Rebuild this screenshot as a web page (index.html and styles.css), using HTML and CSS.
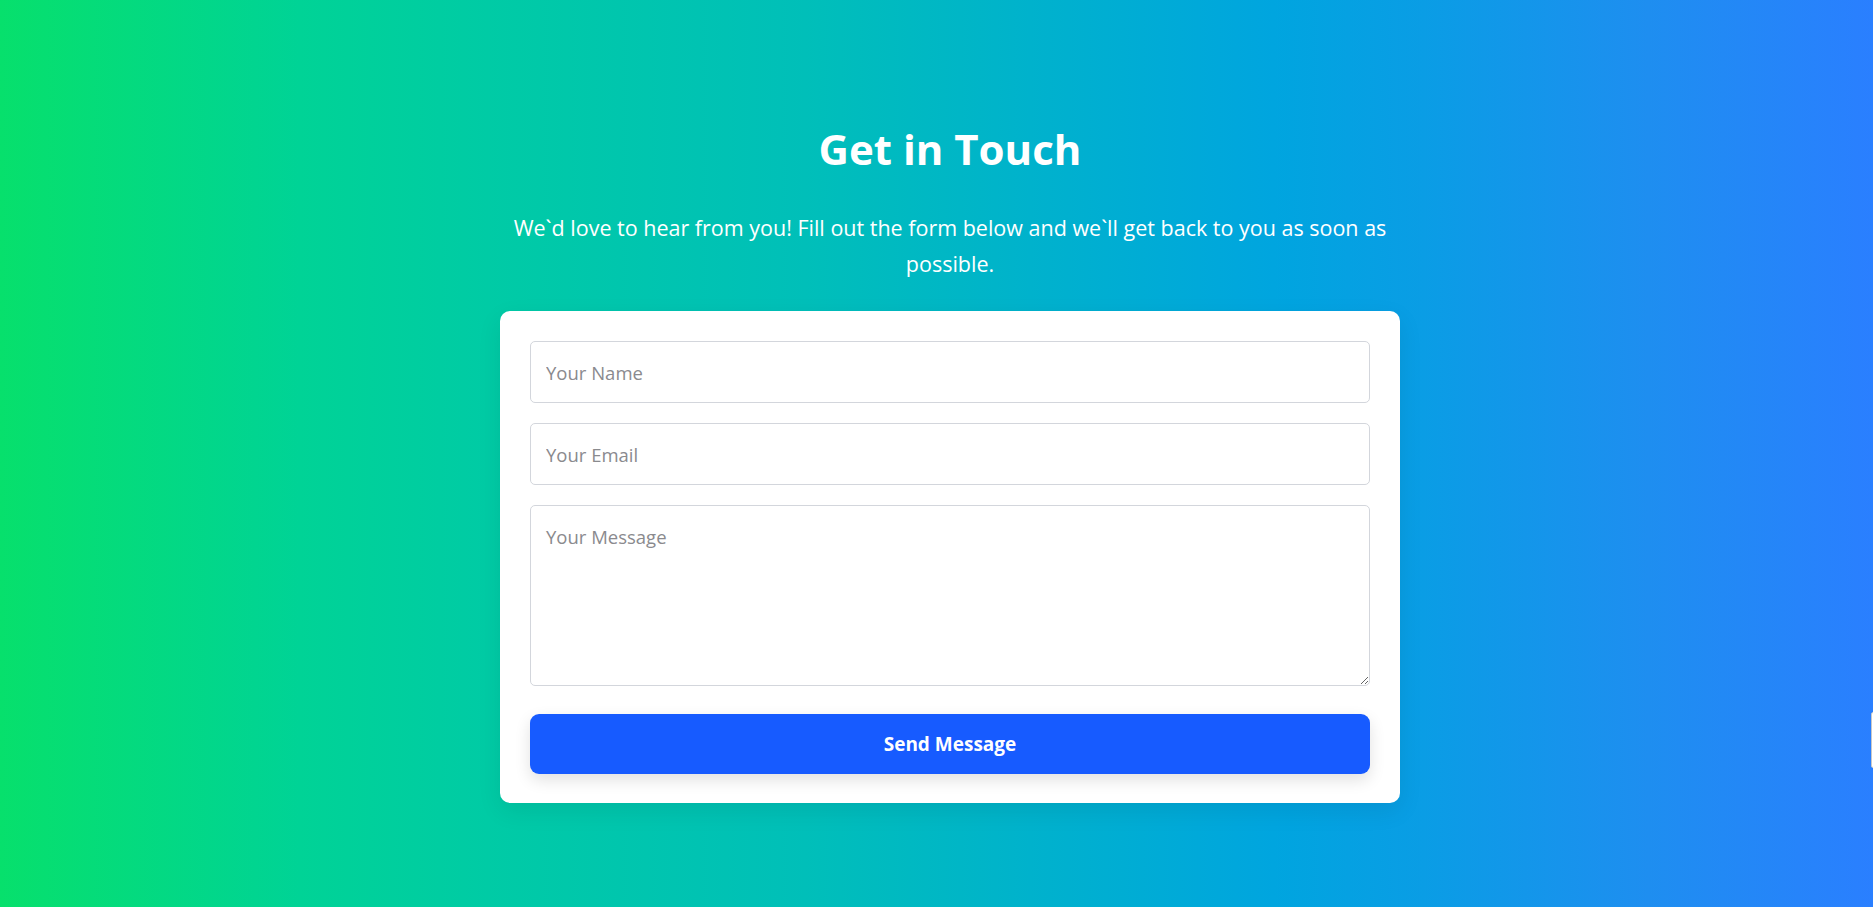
FILE: index.html
```html
<!DOCTYPE html>
<html lang="en">
<head>
<meta charset="utf-8">
<title>Contact</title>
<link rel="stylesheet" href="styles.css">
</head>
<body>
  <main class="contact">
    <h1 class="contact-title">Get in Touch</h1>
    <p class="contact-intro">We`d love to hear from you! Fill out the form below and we`ll get back to you as soon as possible.</p>
    <form class="contact-card">
      <input class="field" type="text" placeholder="Your Name">
      <input class="field" type="email" placeholder="Your Email">
      <textarea class="field field-area" placeholder="Your Message"></textarea>
      <button class="send-btn" type="button">Send Message</button>
    </form>
  </main>
  <div class="edge-tab"></div>
</body>
</html>
```
FILE: styles.css
```css
* { box-sizing: border-box; }
html, body { margin: 0; padding: 0; }
body {
  min-height: 907px;
  padding-left: 27px;
  font-family: "Open Sans", "Noto Sans", sans-serif;
  background: linear-gradient(90deg, #07e06c 0%, #00d396 16%, #00cba5 26%, #00bfb9 43%, #00b2cc 55%, #00a5df 68%, #0a9de5 76%, #1e8ef0 88%, #2a7fff 100%);
  overflow: hidden;
}
.contact {
  width: 900px;
  margin: 0 auto;
  padding-top: 122px;
  display: flex;
  flex-direction: column;
  align-items: stretch;
}
.contact-title {
  margin: 0;
  color: #fff;
  font-size: 42px;
  line-height: 54px;
  font-weight: 700;
  text-align: center;
}
.contact-intro {
  margin: 34px 0 0;
  color: #fff;
  font-size: 21.5px;
  line-height: 36px;
  text-align: center;
}
.contact-card {
  margin-top: 29px;
  background: #fff;
  border-radius: 10px;
  padding: 30px 30px 29px;
  display: flex;
  flex-direction: column;
  gap: 20px;
  box-shadow: 0 8px 24px rgba(0, 0, 0, 0.08);
}
.field {
  display: block;
  width: 100%;
  height: 62px;
  margin: 0;
  padding: 0 15px;
  border: 1px solid #d3d6dc;
  border-radius: 5px;
  font-family: "Open Sans", "Noto Sans", sans-serif;
  font-size: 18.5px;
  color: #333;
  background: #fff;
  outline: none;
}
.field::placeholder { color: #8a8a8e; }
.field-area {
  height: 181px;
  padding: 18px 15px;
  resize: vertical;
}
.send-btn {
  margin-top: 8px;
  height: 60px;
  border: none;
  border-radius: 9px;
  background: #175bff;
  color: #fff;
  font-family: "Open Sans", "Noto Sans", sans-serif;
  font-size: 19px;
  font-weight: 700;
  box-shadow: 0 6px 16px rgba(0, 0, 0, 0.12);
  cursor: pointer;
}
.edge-tab {
  position: fixed;
  right: -8px;
  top: 712px;
  width: 10px;
  height: 56px;
  background: #fff;
  border: 1px solid #c8c8c8;
  border-radius: 2px;
}
```
